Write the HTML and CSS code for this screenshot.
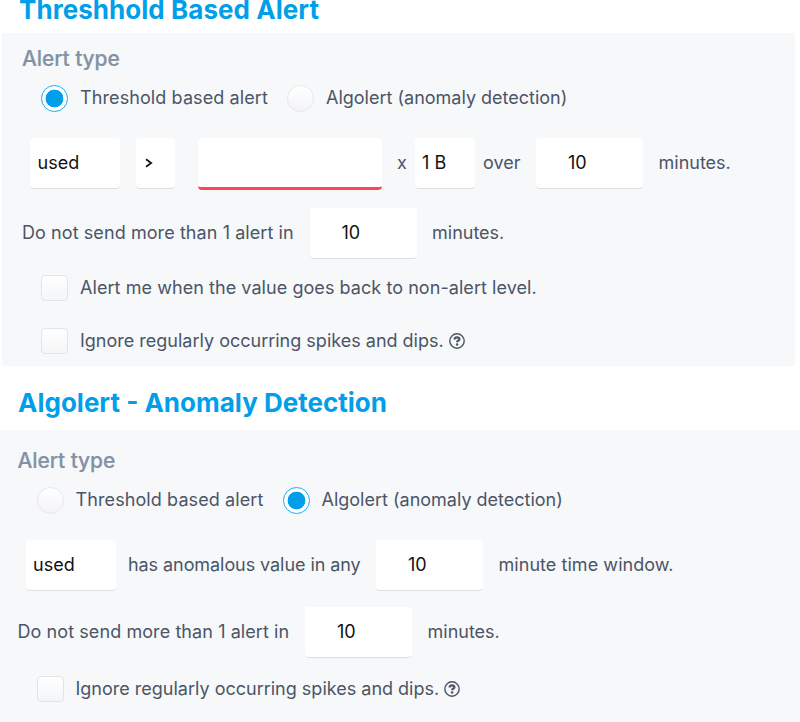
FILE: index.html
```html
<!DOCTYPE html>
<html lang="en">
<head>
<meta charset="utf-8">
<title>Alert types</title>
<link rel="stylesheet" href="styles.css">
</head>
<body>
<h1 class="heading heading-first">Threshhold Based Alert</h1>
<section class="panel panel-threshold">
  <h2 class="title">Alert type</h2>
  <div class="row radios">
    <span class="radio checked"></span><span class="label first-label">Threshold based alert</span>
    <span class="radio"></span><span class="label">Algolert (anomaly detection)</span>
  </div>
  <div class="row fields">
    <span class="box metric">used</span>
    <span class="box operator"><svg width="8" height="10" viewBox="0 0 8 10"><path d="M1 1.200 6.200 5 1 8.800" fill="none" stroke="#111" stroke-width="1.700"/></svg></span>
    <span class="box value"></span>
    <span class="times">x</span>
    <span class="box unit">1 B</span>
    <span class="over">over</span>
    <span class="box number">10</span>
    <span class="after">minutes.</span>
  </div>
  <div class="row limit">
    <span class="limit-text">Do not send more than 1 alert in</span>
    <span class="box number">10</span>
    <span class="after">minutes.</span>
  </div>
  <div class="row check back">
    <span class="checkbox"></span><span class="label back-text">Alert me when the value goes back to non-alert level.</span>
  </div>
  <div class="row check">
    <span class="checkbox"></span><span class="label ignore-text">Ignore regularly occurring spikes and dips.</span>
    <svg class="help" width="16" height="16" viewBox="0 0 16 16"><circle cx="8" cy="8" r="7.200" fill="none" stroke="#4b5566" stroke-width="1.400"/><path d="M5.600 6.500C5.700 4.900 6.700 4.400 8 4.400c1.400 0 2.400.7 2.400 1.800C10.400 7.600 8.100 7.500 8.100 9.300" fill="none" stroke="#4b5566" stroke-width="2.200"/><circle cx="8.100" cy="11.500" r="1.250" fill="#4b5566"/></svg>
  </div>
</section>
<h1 class="heading heading-second">Algolert - Anomaly Detection</h1>
<section class="panel panel-anomaly">
  <h2 class="title">Alert type</h2>
  <div class="row radios">
    <span class="radio"></span><span class="label first-label">Threshold based alert</span>
    <span class="radio checked"></span><span class="label">Algolert (anomaly detection)</span>
  </div>
  <div class="row fields">
    <span class="box metric">used</span>
    <span class="anomaly-text">has anomalous value in any</span>
    <span class="box number">10</span>
    <span class="after window">minute time window.</span>
  </div>
  <div class="row limit">
    <span class="limit-text">Do not send more than 1 alert in</span>
    <span class="box number">10</span>
    <span class="after">minutes.</span>
  </div>
  <div class="row check">
    <span class="checkbox"></span><span class="label ignore-text">Ignore regularly occurring spikes and dips.</span>
    <svg class="help" width="16" height="16" viewBox="0 0 16 16"><circle cx="8" cy="8" r="7.200" fill="none" stroke="#4b5566" stroke-width="1.400"/><path d="M5.600 6.500C5.700 4.900 6.700 4.400 8 4.400c1.400 0 2.400.7 2.400 1.800C10.400 7.600 8.100 7.500 8.100 9.300" fill="none" stroke="#4b5566" stroke-width="2.200"/><circle cx="8.100" cy="11.500" r="1.250" fill="#4b5566"/></svg>
  </div>
</section>
</body>
</html>
```
FILE: styles.css
```css
* { box-sizing: border-box; }
body {
  margin: 0;
  height: 722px;
  overflow: hidden;
  background: #fff;
  color: #4b5566;
  font: 18px/24px Inter, "Liberation Sans", sans-serif;
  white-space: nowrap;
}
.heading {
  margin: 0;
  color: #019fe9;
  font: 700 26px/32px Inter, sans-serif;
}
.heading-first { height: 33px; padding-left: 19px; line-height: 20px; letter-spacing: 0.05px; }
.heading-second { height: 64px; padding-left: 18px; line-height: 73px; }
.panel { background: #f7f8fa; }
.panel-threshold { width: 793px; height: 333px; margin-left: 2px; padding: 10px 0 0 20px; }
.panel-anomaly { height: 292px; padding: 15px 0 0 17.5px; }
.title {
  margin: 0;
  color: #8292a5;
  font-size: 21px;
  font-weight: 500;
  line-height: 32px;
  letter-spacing: -0.1px;
  -webkit-text-stroke: 0.2px;
}
.row { display: flex; align-items: center; }
.radios { height: 46px; padding-left: 19px; }
.radio {
  flex: none;
  width: 27px;
  height: 27px;
  border: 1px solid #e4e7ec;
  border-radius: 50%;
  background: linear-gradient(#fff, #f3f4f7);
}
.radio.checked {
  border-color: #25a9ea;
  background: radial-gradient(circle, #019fe9 8.5px, #fff 9.2px);
}
.label { margin-left: 12px; }
.first-label { width: 194.5px; margin-right: 12.5px; letter-spacing: 0.1px; }
.fields { height: 84px; padding-left: 8px; }
.box {
  flex: none;
  display: flex;
  align-items: center;
  height: 51px;
  padding-left: 8px;
  border-radius: 4px;
  border-bottom: 1px solid #dcdedf;
  background: #fff;
  color: #111;
}
.metric { width: 90px; padding-left: 7.5px; }
.operator { width: 39px; margin-left: 15.5px; padding-left: 9px; }
.value { width: 184px; margin-left: 23.5px; border-bottom: 3px solid #ff4553; height: 52px; margin-top: 1px; }
.times { width: 18px; margin-left: 15px; }
.unit { width: 60px; padding-left: 7px; }
.over { width: 45px; margin: 0 8px; }
.number { width: 107px; padding-left: 32px; }
.after { margin-left: 15.5px; }
.limit { height: 56px; }
.limit-text { width: 287.5px; letter-spacing: 0.08px; }
.check { height: 52px; padding-left: 19px; }
.back { height: 54px; }
.back-text { letter-spacing: 0.06px; }
.checkbox {
  flex: none;
  width: 27px;
  height: 26px;
  border: 1px solid #e1e4e9;
  border-radius: 4px;
  background: linear-gradient(#fff, #f4f5f7);
}
.check .label { margin-left: 12px; }
.help { flex: none; margin-left: 5px; }
.anomaly-text { width: 248px; margin-left: 12.5px; letter-spacing: -0.07px; }
.panel-anomaly .limit { height: 50px; }
.panel-anomaly .check { height: 63px; }
.window { letter-spacing: 0.05px; }
```
